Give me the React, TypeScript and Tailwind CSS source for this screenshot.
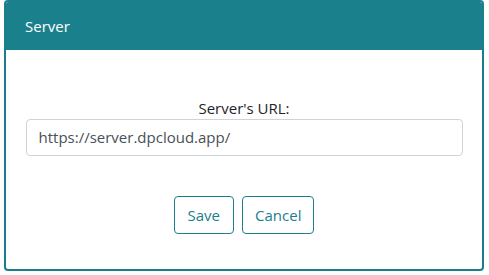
import React from "react";

export default function App() {
  return (
    <div className="w-[489px] h-[275px] bg-white" style={{ fontFamily: '"Open Sans", "Noto Sans", sans-serif' }}>
      <div className="ml-[4px] w-[480px] h-[271px] border-2 border-[#1a7f8c] rounded-[4px] flex flex-col overflow-hidden">
        <div className="h-[48px] bg-[#1a808c] flex items-center px-[19px] text-white text-[15px]">
          Server
        </div>
        <div className="flex flex-col items-center pt-[48px]">
          <div className="text-[15px] text-[#212529] leading-[20px]">Server's URL:</div>
          <div className="mt-[1px] w-[437px] h-[37px] border border-[#ced4da] rounded-[4px] flex items-center px-[12px] text-[15px] text-[#495057]">
            https://server.dpcloud.app/
          </div>
          <div className="mt-[40px] flex gap-[8px]">
            <button className="h-[38px] px-[13px] border border-[#1a7f8c] rounded-[4px] text-[#1a7f8c] text-[15px]">Save</button>
            <button className="h-[38px] px-[12px] border border-[#1a7f8c] rounded-[4px] text-[#1a7f8c] text-[15px]">Cancel</button>
          </div>
        </div>
      </div>
    </div>
  );
}
